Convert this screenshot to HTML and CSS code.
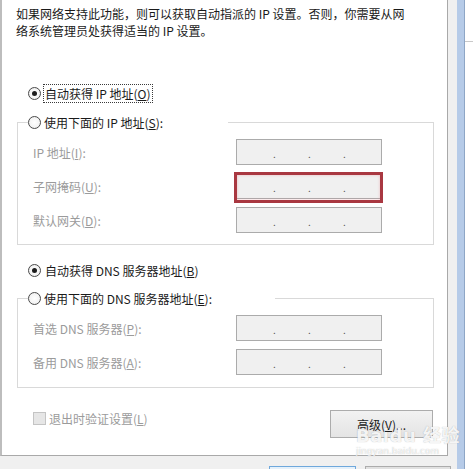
FILE: index.html
```html
<!DOCTYPE html>
<html lang="zh-CN">
<head>
<meta charset="utf-8">
<title>IPv4 属性</title>
<link rel="stylesheet" href="styles.css">
</head>
<body>
<div class="dialog">
  <div class="panel">
    <p class="intro">如果网络支持此功能，则可以获取自动指派的 IP 设置。否则，你需要从网<br>络系统管理员处获得适当的 IP 设置。</p>

    <div class="radio-row ip-auto">
      <span class="radio checked"></span>
      <span class="rlabel focus">自动获得 IP 地址(<u>O</u>)</span>
    </div>

    <fieldset class="group ip-group">
      <legend class="ip-legend"><span class="radio"></span><span class="rlabel">使用下面的 IP 地址(<u>S</u>):</span></legend>
      <div class="fields">
        <span class="flabel">IP 地址(<u>I</u>):</span>
        <div class="ipbox"><span>.</span><span>.</span><span>.</span></div>
        <span class="flabel">子网掩码(<u>U</u>):</span>
        <div class="ipbox marked"><span>.</span><span>.</span><span>.</span></div>
        <span class="flabel">默认网关(<u>D</u>):</span>
        <div class="ipbox"><span>.</span><span>.</span><span>.</span></div>
      </div>
    </fieldset>

    <div class="radio-row dns-auto">
      <span class="radio checked"></span>
      <span class="rlabel">自动获得 DNS 服务器地址(<u>B</u>)</span>
    </div>

    <fieldset class="group dns-group">
      <legend class="dns-legend"><span class="radio"></span><span class="rlabel">使用下面的 DNS 服务器地址(<u>E</u>):</span></legend>
      <div class="fields">
        <span class="flabel">首选 DNS 服务器(<u>P</u>):</span>
        <div class="ipbox"><span>.</span><span>.</span><span>.</span></div>
        <span class="flabel">备用 DNS 服务器(<u>A</u>):</span>
        <div class="ipbox"><span>.</span><span>.</span><span>.</span></div>
      </div>
    </fieldset>

    <div class="bottom-row">
      <label class="check"><span class="checkbox"></span><span>退出时验证设置(<u>L</u>)</span></label>
      <button class="btn advanced">高级(<u>V</u>)...</button>
    </div>
  </div>
  <div class="actions">
    <button class="btn ok">确定</button>
    <button class="btn cancel">取消</button>
  </div>
</div>
<div class="frame"></div>
<div class="behind"><div class="behind-line"></div></div>

<div class="watermark">
  <div class="wm-big">Baidu 经验</div>
  <div class="wm-small">jingyan.baidu.com</div>
</div>
</body>
</html>
```

FILE: styles.css
```css
html, body {
  margin: 0;
  padding: 0;
}

body {
  width: 473px;
  height: 469px;
  overflow: hidden;
  display: flex;
  background: #ffffff;
  font-family: "Noto Sans CJK SC", "Microsoft YaHei", sans-serif;
  font-size: 12px;
  color: #1a1a1a;
  position: relative;
}

u {
  text-decoration: underline;
  text-underline-offset: 1px;
}

.dialog {
  width: 457px;
  flex: none;
  background: #f0f0f0;
}

.panel {
  width: 448px;
  height: 456px;
  box-sizing: border-box;
  background: #ffffff;
  border-left: 2px solid #bdbdbd;
  border-right: 1px solid #a9a9a9;
  border-bottom: 1px solid #a9a9a9;
  display: flex;
  flex-direction: column;
}

.intro {
  margin: 5px 0 0 14px;
  line-height: 17px;
  color: #1a1a1a;
}

.radio-row {
  display: flex;
  align-items: center;
  height: 19px;
  margin-left: 26px;
}

.ip-auto {
  margin-top: 45px;
}

.dns-auto {
  margin-top: 16px;
}

.radio {
  width: 13px;
  height: 13px;
  box-sizing: border-box;
  border: 1px solid #4a4a4a;
  border-radius: 50%;
  background: radial-gradient(circle at 50% 50%, #ffffff 0%, #f4f4f4 60%, #e2e2e2 100%);
  display: inline-flex;
  align-items: center;
  justify-content: center;
  flex: none;
}

.radio.checked::after {
  content: "";
  width: 5px;
  height: 5px;
  border-radius: 50%;
  background: #1c1c1c;
}

.rlabel {
  line-height: 17px;
  margin-left: 2px;
  padding: 0 1px;
  border: 1px dotted transparent;
  white-space: nowrap;
}

.rlabel.focus {
  border-color: #3a3a3a;
}

.group {
  margin: 0 13px 0 15px;
  padding: 8px 0 11px 0;
  border: 1px solid #d9d9d9;
  min-width: 0;
}

.ip-group {
  margin-top: 11px;
}

.dns-group {
  margin-top: 10px;
  padding-bottom: 12px;
}

.group legend {
  display: flex;
  align-items: center;
  margin-left: 10px;
  padding: 0;
  height: 17px;
  box-sizing: border-box;
}

.group legend .rlabel {
  padding: 0;
  border: none;
  margin-left: 3px;
}

.ip-legend {
  width: 200px;
}

.dns-legend {
  width: 247px;
}

.fields {
  display: grid;
  grid-template-columns: 203px 146px;
  grid-auto-rows: 26px;
  row-gap: 8px;
  align-items: center;
  padding-left: 15px;
}

.flabel {
  color: #9b9b9b;
  line-height: 17px;
  white-space: nowrap;
}

.ipbox {
  height: 26px;
  box-sizing: border-box;
  border: 1px solid #ababab;
  background: #f0f0f0;
  display: flex;
  align-items: center;
  padding: 3px 0 0 36px;
  gap: 32px;
  color: #555555;
  font-size: 10px;
  line-height: 10px;
  position: relative;
}

.ipbox span {
  width: 3px;
  text-align: center;
}

.ipbox.marked::after {
  content: "";
  position: absolute;
  left: -3px;
  top: -2px;
  width: 149px;
  height: 31px;
  box-sizing: border-box;
  border: 3px solid #a93841;
  box-shadow: inset 0 0 3px rgba(230, 120, 130, 0.45);
}

.bottom-row {
  display: flex;
  justify-content: space-between;
  align-items: flex-start;
  margin: 22px 14px 0 31px;
}

.check {
  display: flex;
  align-items: center;
  color: #9b9b9b;
  line-height: 17px;
}

.checkbox {
  width: 13px;
  height: 13px;
  box-sizing: border-box;
  border: 1px solid #c4c4c4;
  background: #e6e6e6;
  margin-right: 3px;
  flex: none;
}

.btn {
  font-family: "Noto Sans CJK SC", "Microsoft YaHei", sans-serif;
  font-size: 12px;
  color: #1a1a1a;
  box-sizing: border-box;
  border: 1px solid #acacac;
  background: linear-gradient(#f2f2f2, #e4e4e4);
  padding: 0;
  margin: 0;
}

.advanced {
  width: 103px;
  height: 28px;
}

.actions {
  display: flex;
  gap: 9px;
  margin: 10px 0 0 269px;
}

.ok {
  width: 87px;
  height: 23px;
  border-color: #6fa8dc;
  background: #e5f1fb;
}

.cancel {
  width: 86px;
  height: 23px;
  background: #e1e1e1;
}

.frame {
  width: 7px;
  flex: none;
  background: #b6cbe8;
  border-right: 1px solid #8ea6c6;
}

.behind {
  flex: 1;
  background: #ffffff;
}

.behind-line {
  margin-top: 41px;
  border-top: 1px solid #c9c9c9;
}

.watermark {
  position: absolute;
  left: 356px;
  top: 426px;
  color: rgba(255, 255, 255, 0.9);
  text-shadow: 0 0 1px rgba(110, 110, 110, 0.55);
  font-family: "DejaVu Sans", "Noto Sans CJK SC", sans-serif;
  pointer-events: none;
}

.wm-big {
  font-size: 18px;
  font-weight: bold;
  line-height: 19px;
  letter-spacing: 0.5px;
}

.wm-small {
  font-size: 9px;
  line-height: 10px;
  margin-top: 1px;
}
```
